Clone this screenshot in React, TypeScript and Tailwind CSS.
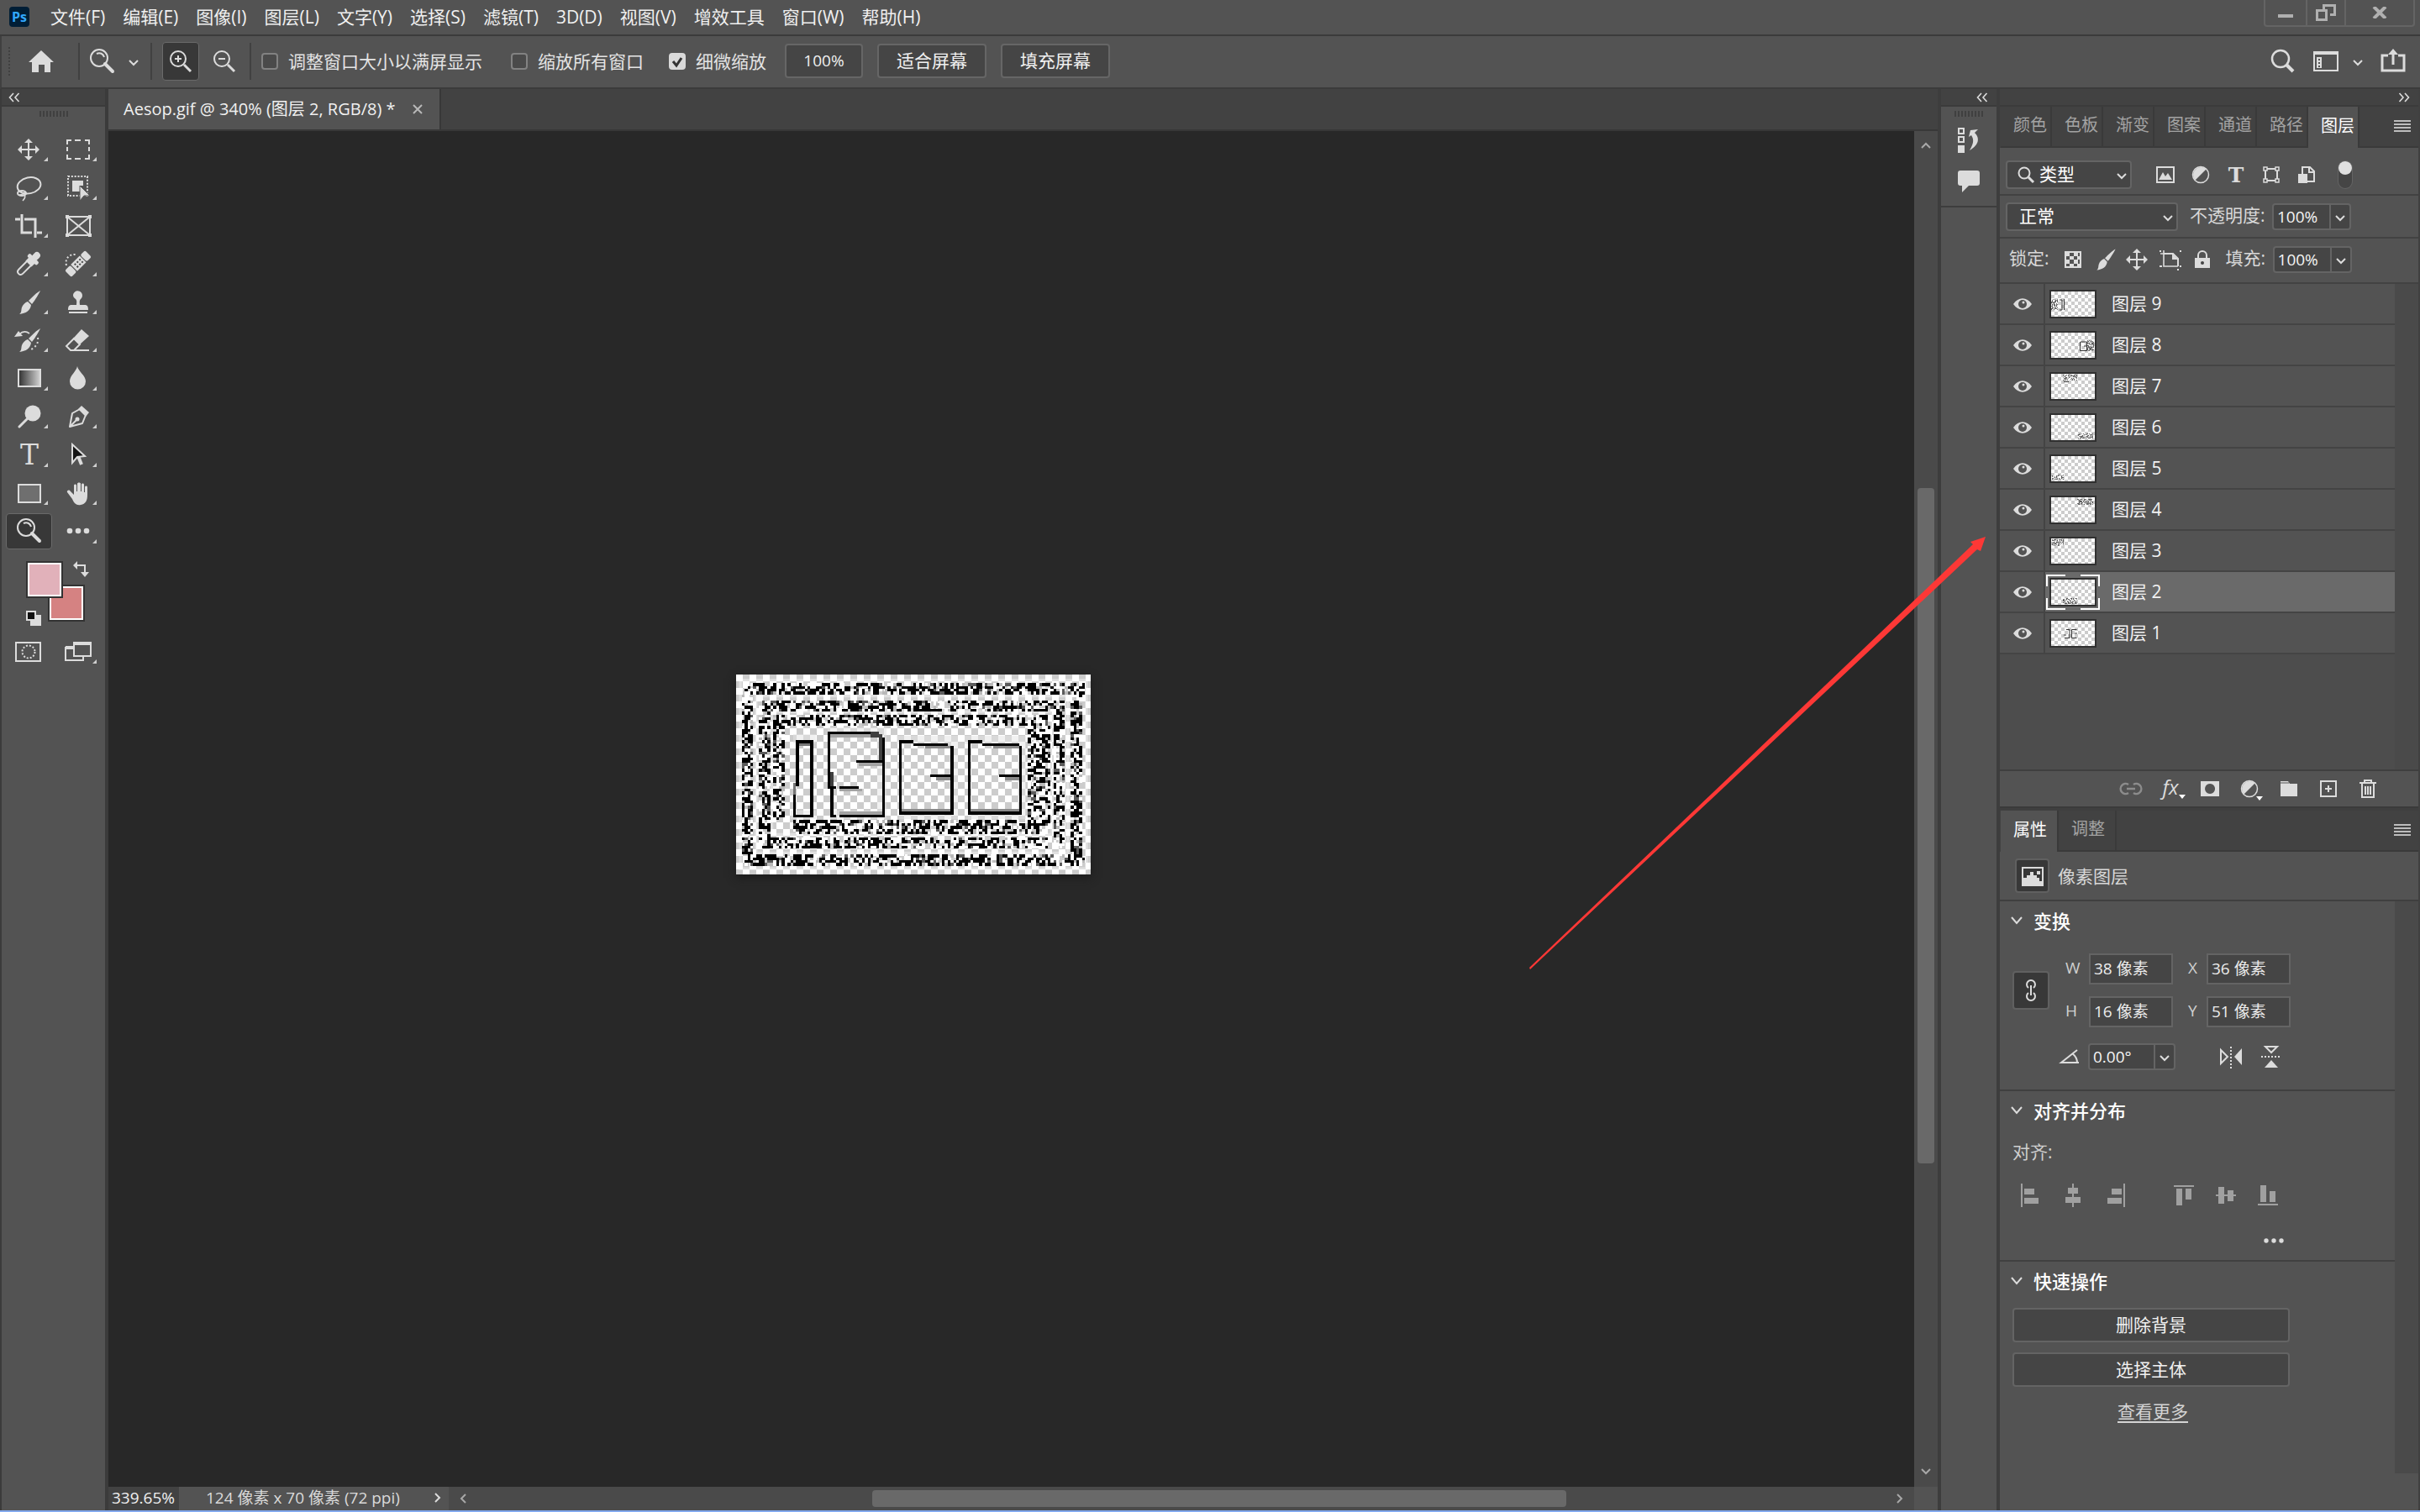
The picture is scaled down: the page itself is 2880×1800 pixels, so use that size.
import type { ReactNode } from "react";
import clsx from "clsx";

const menus = [
  "文件(F)",
  "编辑(E)",
  "图像(I)",
  "图层(L)",
  "文字(Y)",
  "选择(S)",
  "滤镜(T)",
  "3D(D)",
  "视图(V)",
  "增效工具",
  "窗口(W)",
  "帮助(H)",
];

const panelTabs = ["颜色", "色板", "渐变", "图案", "通道", "路径", "图层"];

type Box = [x: number, y: number, w: number, h: number];

const layers: { name: string; noise?: Box; lines?: string; active?: boolean }[] = [
  { name: "图层 9", noise: [0, 9, 8, 13], lines: "M10 10h3v12h-3M15.500 9v13" },
  { name: "图层 8", noise: [43, 9, 8, 13], lines: "M35 11h7.500v10.500h-8V11M39 16h4" },
  { name: "图层 7", noise: [14, 1, 17, 7], lines: "M15 9.500h6" },
  { name: "图层 6", noise: [31, 22, 19, 6] },
  { name: "图层 5", noise: [1, 22, 14, 6] },
  { name: "图层 4", noise: [31, 2, 19, 7] },
  { name: "图层 3", noise: [1, 1, 14, 8] },
  { name: "图层 2", noise: [14, 22, 17, 7], active: true },
  { name: "图层 1", lines: "M18 10.500h4v10h-6M15 17h3M24.500 20.500v-10h6M28 15h3M24.500 20.500h6" },
];

// rectangular rings of static around the digits, in document pixels
const bands: Box[] = [
  [3, 3, 119, 4],
  [9, 9, 106, 4],
  [17, 14, 92, 4],
  [20, 51, 89, 5],
  [9, 57, 100, 4],
  [3, 63, 119, 4],
  [2, 7, 4, 56],
  [8, 11, 4, 48],
  [13, 14, 4, 37],
  [102, 18, 8, 35],
  [111, 11, 4, 50],
  [117, 7, 4, 57],
];

function makeRandom(seed: number) {
  let a = seed;
  return () => {
    a = (a + 0x6d2b79f5) | 0;
    let t = Math.imul(a ^ (a >>> 15), 1 | a);
    t = (t + Math.imul(t ^ (t >>> 7), 61 | t)) ^ t;
    return ((t ^ (t >>> 14)) >>> 0) / 4294967296;
  };
}

function noiseCells([bx, by, w, h]: Box, seed: number) {
  const rand = makeRandom(seed);
  const out: Record<string, string> = { black: "", gray: "", light: "", white: "" };
  for (let y = by; y < by + h; y++) {
    for (let x = bx; x < bx + w; x++) {
      const r = rand();
      const kind = r < 0.43 ? "black" : r < 0.5 ? "gray" : r < 0.55 ? "light" : r < 0.8 ? "white" : "";
      if (kind) out[kind] += `M${x} ${y}h1v1h-1z`;
    }
  }
  return out;
}

function Noise({ box, seed }: { box: Box; seed: number }) {
  const cells = noiseCells(box, seed);
  return (
    <g shapeRendering="crispEdges">
      <path d={cells.white} fill="#fff" />
      <path d={cells.light} fill="#b9b9b9" />
      <path d={cells.gray} fill="#5c5c5c" />
      <path d={cells.black} fill="#000" />
    </g>
  );
}

function Artwork() {
  return (
    <svg viewBox="0 0 124 70" preserveAspectRatio="none" className="h-full w-full">
      <g fill="none" stroke="#fff" strokeWidth="1" opacity=".4">
        <rect x="1.500" y="2" width="121" height="66" />
        <rect x="7" y="7.500" width="109" height="55" />
        <rect x="12.500" y="13" width="98" height="43" />
      </g>
      {bands.map((b, i) => (
        <Noise key={i} box={b} seed={i * 7919 + 31} />
      ))}
      <g shapeRendering="crispEdges">
        <path
          d="M20 22.500h8M32 20h19v29h-18M56 23h20v26h-19M80 23h20v26h-19M19 49h9"
          fill="none"
          stroke="#e4e4e4"
          strokeWidth="3"
          opacity=".5"
        />
        {/* 1 */}
        <path d="M21 23h6v1h-6zM21 23h1v16h-1zM20 42h1v8h-1zM26 23h1v27h-1zM20 49h7v1h-7z" />
        <path d="M20 38h1v4h-1zM22 24h4v1h-4z" fill="#777" />
        {/* 8 */}
        <path d="M32 20h17v1H32zM32 20h1v19h-1zM51 22h1v28h-1zM42 30h9v1h-9zM32 39h3v1h-3zM36 39h7v1h-7zM33 40h1v10h-1zM33 49h2v1h-2zM36 49h15v1H36z" />
        <path d="M33 21h14v1H33zM43 31h8v1h-8zM36 40h8v1h-8zM36 48h15v1H36z" fill="#a3a3a3" />
        <path d="M47 20h3v1h1v1h-4zM50 22h1v8h-1zM33 34h1v5h-1z" fill="#3f3f3f" />
        {/* 3 */}
        <path d="M57 23h5v1h-5zM57 24h1v25h-1zM62 24h12v1H62zM75 25h1v24h-1zM68 35h7v1h-7zM58 48h17v1H58z" />
        <path d="M66 25h9v1h-9zM70 36h5v1h-5zM58 47h17v1H58z" fill="#8a8a8a" />
        {/* 3 */}
        <path d="M81 23h5v1h-5zM81 24h1v25h-1zM86 24h13v1H86zM99 25h1v24h-1zM92 35h7v1h-7zM82 48h17v1H82z" />
        <path d="M90 25h9v1h-9zM94 36h5v1h-5zM82 47h17v1H82z" fill="#8a8a8a" />
      </g>
    </svg>
  );
}

function Chevron({ dir = "down", className }: { dir?: "down" | "up" | "left" | "right"; className?: string }) {
  const d = {
    down: "M1 3l5 5 5-5",
    up: "M1 8l5-5 5 5",
    left: "M8 1L3 6l5 5",
    right: "M4 1l5 5-5 5",
  }[dir];
  return (
    <svg viewBox="0 0 12 12" className={clsx("h-3 w-3 shrink-0 fill-none stroke-2", className)}>
      <path d={d} stroke="currentColor" />
    </svg>
  );
}

function DoubleChevron({ flip }: { flip?: boolean }) {
  return (
    <svg viewBox="0 0 14 12" className={clsx("h-3 w-3.5", flip && "-scale-x-100")} fill="none" stroke="#ddd" strokeWidth="1.6">
      <path d="M6 1L1.500 6 6 11M12.500 1L8 6l4.500 5" />
    </svg>
  );
}

function Grip() {
  return (
    <div className="flex h-[7px] justify-center gap-0.5">
      {Array.from({ length: 9 }, (_, i) => (
        <i key={i} className="w-0.5 bg-[#404040]" />
      ))}
    </div>
  );
}

function Glyph({ size = 32, children, className }: { size?: number; children: ReactNode; className?: string }) {
  return (
    <svg
      width={size}
      height={size}
      viewBox={`${-size / 2} ${-size / 2} ${size} ${size}`}
      className={clsx("shrink-0 overflow-visible", className)}
      fill="#dcdcdc"
      stroke="none"
    >
      {children}
    </svg>
  );
}

const outline = { fill: "none", stroke: "#dcdcdc", strokeWidth: 2 };

const moveArrows = (
  <path d="M-1-8h2v7h7v-4l5 5-5 5v-4h-7v7h4l-5 5-5-5h4v-7h-7v4l-5-5 5-5v4h7v-7h-4l5-5 5 5h-4z" />
);
const brush = (
  <>
    <path d="M14-14c-2 4-6 11-10 16L0-2C4-6 10-12 14-14z" />
    <path d="M-1-1l4 4c-1 7-6 10-14 11 3-2 2-5 3-8s4-6 7-7z" />
  </>
);
const magnifier = (
  <>
    <circle cx="-3" cy="-4" r="10" {...outline} />
    <path d="M-6-9c4-2 8 0 9 4" {...outline} />
    <path d="M4 3L13 12" {...outline} strokeWidth={4} strokeLinecap="round" />
  </>
);

const tools: { name: string; icon: ReactNode; plain?: boolean; on?: boolean }[] = [
  { name: "移动工具", icon: moveArrows },
  {
    name: "矩形选框工具",
    icon: <path d="M-13-6v-5h5M-4-11h7M8-11h5v5M13-3v5M13 6v5h-5M3 11h-7M-8 11h-5v-5M-13 2v-5" {...outline} />,
  },
  {
    name: "套索工具",
    icon: (
      <>
        <ellipse cx="1" cy="-2" rx="14" ry="9.500" transform="rotate(-12)" {...outline} />
        <ellipse cx="-8" cy="7" rx="5" ry="3" {...outline} />
        <path d="M-11 9c3 0 6-2 7-4M-6 8c3 2 2 5-1 8" {...outline} strokeWidth={1.6} />
      </>
    ),
  },
  {
    name: "对象选择工具",
    icon: (
      <>
        <path d="M-12-13h23v23h-23z" {...outline} strokeDasharray="2 1.830" />
        <path d="M-7-8H6V-2H2V5H-7z" />
        <path d="M2-2v18l5-6h7z" stroke="#535353" strokeWidth="1" />
      </>
    ),
  },
  {
    name: "裁剪工具",
    icon: <path d="M-16-8h6M-8-14V8H4M-5-8H8v22M10 8h6" {...outline} strokeWidth={3} />,
  },
  {
    name: "图框工具",
    plain: true,
    icon: (
      <>
        <path d="M-13-11h27v22h-27zM-13-11l27 22M14-11l-27 22" {...outline} />
        <path d="M-15-13h4v4h-4zM12-13h4v4h-4zM-15 9h4v4h-4zM12 9h4v4h-4z" />
      </>
    ),
  },
  {
    name: "吸管工具",
    icon: (
      <g transform="rotate(45)">
        <rect x="-4" y="-18" width="8" height="11" rx="4" />
        <rect x="-8" y="-10" width="16" height="5" rx="2" />
        <rect x="-5" y="-8" width="10" height="8" />
        <path d="M-3.500-1v14c0 5 7 5 7 0V-1" {...outline} />
      </g>
    ),
  },
  {
    name: "污点修复画笔工具",
    icon: (
      <>
        <g transform="rotate(45)">
          <rect x="-5.500" y="-17" width="11" height="8" rx="2" />
          <rect x="-5.500" y="-8" width="11" height="15" />
          <rect x="-5.500" y="8" width="11" height="9" rx="2" />
          <path d="M-3-5h2M1-5h2M-3-1h2M1-1h2M-3 3h2M1 3h2" stroke="#444" strokeWidth="2" />
        </g>
        <path d="M-14 2c-2-8 3-14 12-13" {...outline} strokeDasharray="2 2.500" />
      </>
    ),
  },
  { name: "画笔工具", icon: brush },
  {
    name: "仿制图章工具",
    icon: <path d="M-6-8a5.500 5.500 0 1 1 9 4c-2 2-1 5-1 7h6c3 0 4 2 4 6h-24c0-4 1-6 4-6h6c0-2 1-5-1-7a5 5 0 0 1-3-4zM-11 11h22v2h-22z" />,
  },
  {
    name: "历史记录画笔工具",
    icon: (
      <>
        {brush}
        <path d="M-17-4l5-7 5 6z" />
        <path d="M-11-7c4-4 8-4 12-1" {...outline} strokeWidth={1.6} />
        <path d="M11-3c1 6-2 11-8 14" {...outline} strokeDasharray="2 3" />
      </>
    ),
  },
  {
    name: "橡皮擦工具",
    icon: (
      <>
        <path d="M-6-2L4-13l9 8L2 5z" />
        <path d="M-5-2l-9 9 5 5h4L2 5zM-9 12h22" {...outline} />
      </>
    ),
  },
  {
    name: "渐变工具",
    icon: (
      <>
        <defs>
          <linearGradient id="ramp">
            <stop offset="0" stopColor="#303030" />
            <stop offset="1" stopColor="#d4d4d4" />
          </linearGradient>
        </defs>
        <rect x="-12" y="-10" width="26" height="20" fill="url(#ramp)" stroke="#dcdcdc" strokeWidth="2" />
      </>
    ),
  },
  { name: "模糊工具", icon: <path d="M-1-14c1 6 10 11 10 18a9.500 9.500 0 0 1-19 0c0-7 8-12 9-18z" /> },
  {
    name: "减淡工具",
    icon: (
      <>
        <circle cx="5" cy="-4" r="9.500" />
        <path d="M-1 2l-10 10" {...outline} strokeWidth={3} strokeLinecap="round" />
      </>
    ),
  },
  {
    name: "钢笔工具",
    icon: (
      <>
        <path d="M-10 12l3-16 9-5 7 7-4 10zM-10 12l9-9" {...outline} strokeLinejoin="round" />
        <circle cx="-1" cy="3" r="2.500" />
        <path d="M4-13l9 8-4 5-9-9z" />
      </>
    ),
  },
  {
    name: "文字工具",
    icon: (
      <text x="1" y="12" textAnchor="middle" className="font-['DejaVu_Serif',serif] text-[33px]">
        T
      </text>
    ),
  },
  {
    name: "路径选择工具",
    icon: (
      <>
        <path d="M0 2l4 10" {...outline} strokeWidth={4} />
        <path d="M-7-12v22l6-7 9-1z" fill="#151515" stroke="#dcdcdc" strokeWidth="2" />
      </>
    ),
  },
  {
    name: "矩形工具",
    icon: <rect x="-12" y="-10" width="26" height="21" fill="#6f6f6f" stroke="#dcdcdc" strokeWidth="2" />,
  },
  {
    name: "抓手工具",
    icon: (
      <path d="M-7 7l-6-8c-1-2 2-3 3-2l5 5v-11c0-2 3-2 3 0v7h1v-9c0-2 4-2 4 0v9h1v-8c0-2 3-2 3 0v9h1v-6c0-2 3-2 3 0v9c0 7-2 11-8 12-5 1-8-2-10-7z" />
    ),
  },
  { name: "缩放工具", icon: magnifier, plain: true, on: true },
  {
    name: "编辑工具栏",
    icon: (
      <>
        <circle cx="-10" r="3.300" />
        <circle r="3.300" />
        <circle cx="10" r="3.300" />
      </>
    ),
  },
];

function ToolButton({ name, icon, plain, on }: (typeof tools)[number]) {
  return (
    <button
      aria-label={name}
      className={clsx(
        "relative flex h-[43px] w-[55px] items-center justify-center place-self-center rounded border",
        on ? "border-[#6a6a6a] bg-[#383838]" : "border-transparent",
      )}
    >
      <Glyph>{icon}</Glyph>
      {!plain && (
        <svg viewBox="0 0 6 6" className="absolute right-1 bottom-1.5 h-[5px] w-[5px] fill-[#cfcfcf]">
          <path d="M6 0v6H0z" />
        </svg>
      )}
    </button>
  );
}

function TitleBar() {
  return (
    <header className="flex h-[43px] shrink-0 border-b-2 border-[#3b3b3b] pl-[11px]">
      <div className="mt-2 flex h-6 w-6 items-center justify-center rounded bg-[#001e36] text-base font-bold text-[#31a8ff]">
        Ps
      </div>
      <nav className="flex h-10 items-center gap-[21px] pl-[25px]">
        {menus.map((m) => (
          <button key={m} className="whitespace-nowrap">
            {m}
          </button>
        ))}
      </nav>
      <div className="mr-1.5 ml-auto flex h-8 rounded-b border-2 border-t-0 border-[#646464]">
        <button aria-label="最小化" className="flex w-12 items-center justify-center">
          <i className="mt-2 h-1 w-[18px] bg-[#b0b0b0]" />
        </button>
        <button aria-label="还原" className="flex w-12 items-center justify-center border-x-2 border-[#646464]">
          <svg viewBox="0 0 24 20" className="h-5 w-6 fill-none stroke-[#b0b0b0] stroke-3">
            <path d="M9.500 7V1.500h13v11H17M1.500 7.500h11v11h-11z" />
          </svg>
        </button>
        <button aria-label="关闭" className="flex w-20 items-center justify-center">
          <svg viewBox="0 0 18 14" className="h-3.5 w-[18px] stroke-[#b0b0b0] stroke-4">
            <path d="M2 0l14 14M16 0L2 14" />
          </svg>
        </button>
      </div>
    </header>
  );
}

function Check({ label, checked }: { label: string; checked?: boolean }) {
  return (
    <label className="flex items-center gap-3">
      <span className="relative flex">
        <input
          type="checkbox"
          defaultChecked={checked}
          className="h-5 w-5 appearance-none rounded border-2 border-[#828282] bg-[#4a4a4a] checked:border-[#dadada] checked:bg-[#dadada]"
        />
        {checked && (
          <svg viewBox="0 0 20 20" className="pointer-events-none absolute inset-0 fill-none stroke-[#333] stroke-3">
            <path d="M5 10l4 5 6-9" />
          </svg>
        )}
      </span>
      {label}
    </label>
  );
}

function OptionsBar() {
  const divider = "h-11 w-0.5 bg-[#414141]";
  const button = "h-[41px] rounded border-2 border-[#666] bg-[#454545] pb-0.5 text-[#f0f0f0]";
  return (
    <section className="flex h-[63px] shrink-0 items-center border-b-2 border-l-2 border-[#3b3b3b] border-l-[#404040] pb-0.5 text-[#e4e4e4]">
      <div className="ml-2 flex flex-col gap-0.5">
        {Array.from({ length: 9 }, (_, i) => (
          <i key={i} className="h-0.5 w-0.5 bg-[#404040]" />
        ))}
      </div>
      <button aria-label="主页" className="mr-7 ml-[21px]">
        <Glyph className="translate-y-px">
          <path d="M0-14L15 0h-4v12H4V3h-7v9h-8V0h-4z" />
        </Glyph>
      </button>
      <div className={divider} />
      <button aria-label="缩放工具" className="ml-2.5 flex items-center gap-4">
        <Glyph>{magnifier}</Glyph>
        <Chevron className="mt-1 text-[#dcdcdc]" />
      </button>
      <div className={clsx(divider, "mr-3 ml-3.5")} />
      <button aria-label="放大" className="flex h-[46px] w-11 items-center justify-center rounded border border-[#6a6a6a] bg-[#383838]">
        <Glyph>
          <circle cx="-3" cy="-3" r="9" {...outline} />
          <path d="M-7-3h8M-3-7v8" {...outline} />
          <path d="M4 4l8 8" {...outline} strokeWidth={3} />
        </Glyph>
      </button>
      <button aria-label="缩小" className="mx-3.5">
        <Glyph>
          <circle cx="-3" cy="-3" r="9" {...outline} />
          <path d="M-7-3h8" {...outline} />
          <path d="M4 4l8 8" {...outline} strokeWidth={3} />
        </Glyph>
      </button>
      <div className={clsx(divider, "mr-3")} />
      <div className="flex gap-[34px]">
        <Check label="调整窗口大小以满屏显示" />
        <Check label="缩放所有窗口" />
        <div className="-ml-1">
          <Check label="细微缩放" checked />
        </div>
      </div>
      <div className="ml-[22px] flex gap-[17px]">
        <button className={clsx(button, "w-[93px] text-[19px]")}>100%</button>
        <button className={clsx(button, "w-[130px]")}>适合屏幕</button>
        <button className={clsx(button, "w-[130px]")}>填充屏幕</button>
      </div>
      <div className="mr-4 ml-auto flex items-center">
        <button aria-label="搜索">
          <Glyph>
            <circle cx="-2" cy="-3" r="10" {...outline} strokeWidth={2.5} />
            <path d="M5 4l8 8" {...outline} strokeWidth={4} />
          </Glyph>
        </button>
        <button aria-label="工作区" className="ml-5 flex items-center gap-4">
          <Glyph>
            <path d="M-14-9h28v20h-28z" {...outline} />
            <path d="M-15-12h30v4h-30zM-11-5h6v13h-6z" />
            <path d="M-8-3v2M-8 1v2M-8 5v2" stroke="#535353" strokeWidth="2" />
          </Glyph>
          <Chevron className="mt-1 text-[#dcdcdc]" />
        </button>
        <button aria-label="共享" className="ml-5">
          <Glyph>
            <path d="M-6-7h-7v18h26V-7H6" {...outline} strokeWidth={3} />
            <path d="M-6-8l6-7 6 7h-4.500V4h-3V-8z" />
          </Glyph>
        </button>
      </div>
    </section>
  );
}

function ToolBar() {
  return (
    <aside className="flex w-[129px] shrink-0 flex-col border-r-4 border-l-2 border-[#3b3b3b]">
      <button aria-label="折叠工具栏" className="flex h-[21px] items-center border-b-2 border-[#3b3b3b] bg-[#424242] pl-2">
        <DoubleChevron />
      </button>
      <div className="h-7 pt-[5px]">
        <Grip />
      </div>
      <div className="grid h-[500px] grid-cols-2 pr-[3px] pl-[3px]">
        {tools.map((t) => (
          <ToolButton key={t.name} {...t} />
        ))}
      </div>
      <div className="relative h-[98px]">
        <button aria-label="背景色" className="absolute top-[41px] left-[55px] h-11 w-11 border-2 border-[#333] bg-white p-0.5">
          <i className="block h-full bg-[#d58282]" />
        </button>
        <button aria-label="前景色" className="absolute top-[13px] left-[29px] h-11 w-11 border-2 border-[#333] bg-white p-0.5">
          <i className="block h-full bg-[#e1b1ba]" />
        </button>
        <button aria-label="切换前景色和背景色" className="absolute top-[13px] left-[84px]">
          <Glyph size={20}>
            <path d="M-5-5H5V4" {...outline} />
            <path d="M-9-5l5-5v10zM0 3h10l-5 6z" />
          </Glyph>
        </button>
        <button aria-label="默认颜色" className="absolute top-[71px] left-7">
          <Glyph size={20}>
            <path d="M-4-4H9V9H-4z" />
            <path d="M-8-8h10v10h-10z" fill="#111" stroke="#dcdcdc" strokeWidth="2" />
          </Glyph>
        </button>
      </div>
      <div className="grid h-[45px] grid-cols-2 pr-[3px] pl-[3px]">
        <ToolButton
          name="快速蒙版"
          plain
          icon={
            <>
              <path d="M-15-11h29v22h-29z" {...outline} />
              <circle cx="0" r="7.500" {...outline} strokeDasharray="2 2" />
            </>
          }
        />
        <ToolButton
          name="更改屏幕模式"
          icon={
            <>
              <path d="M-6-5h-9v15H6V5" {...outline} />
              <path d="M-15-7h9v4h-9zM-6-12h22v4H-6z" />
              <path d="M-5-11h20V5H-5z" {...outline} />
            </>
          }
        />
      </div>
    </aside>
  );
}

function Document() {
  return (
    <main className="flex min-w-0 flex-1 flex-col">
      <div className="flex h-[50px] shrink-0 border-b-2 border-[#383838] bg-[#424242]">
        <div className="flex items-center gap-5 border-r-2 border-[#383838] bg-[#535353] pr-5 pl-[18px] text-xl text-[#f0f0f0]">
          Aesop.gif @ 340% (图层 2, RGB/8) *
          <button aria-label="关闭文档">
            <svg viewBox="0 0 12 12" className="h-3 w-3 stroke-[#b8b8b8] stroke-2">
              <path d="M1 1l10 10M11 1L1 11" />
            </svg>
          </button>
        </div>
      </div>
      <div className="flex min-h-0 flex-1">
        <div className="relative flex-1 bg-[#282828]">
          <div className="absolute top-[647px] left-[747px] h-[238px] w-[422px] bg-[conic-gradient(#ccc_25%,#fff_0_50%,#ccc_0_75%,#fff_0)] bg-[size:16px_16px] shadow-[0_4px_10px_#1c1c1c]">
            <Artwork />
          </div>
        </div>
        <div className="flex w-7 flex-col items-center bg-[#4a4a4a] py-3 text-[#a8a8a8]">
          <Chevron dir="up" />
          <div className="w-5 flex-1 pt-[401px]">
            <div className="h-[804px] rounded-sm bg-[#696969]" />
          </div>
          <Chevron />
        </div>
      </div>
      <footer className="flex h-7 shrink-0 items-center bg-[#4a4a4a] text-[19px]">
        <input
          aria-label="缩放比例"
          defaultValue="339.65%"
          className="h-full w-[84px] bg-[#424242] pb-0.5 pl-1 text-[#f0f0f0] outline-none"
        />
        <div className="flex h-full w-[321px] items-center justify-between bg-[#535353] pr-2 pb-0.5 pl-8 whitespace-nowrap text-[#dadada]">
          <span>124 像素 x 70 像素 (72 ppi)</span>
          <Chevron dir="right" className="text-[#dcdcdc]" />
        </div>
        <Chevron dir="left" className="ml-3 text-[#a8a8a8]" />
        <div className="flex-1 pl-[480px]">
          <div className="h-5 w-[826px] rounded-sm bg-[#696969]" />
        </div>
        <Chevron dir="right" className="mr-3 text-[#a8a8a8]" />
        <div className="h-full w-7 bg-[#535353]" />
      </footer>
    </main>
  );
}

function PanelStrip() {
  return (
    <div className="flex w-[74px] shrink-0 flex-col border-x-4 border-[#3d3d3d]">
      <div className="flex h-[21px] items-center justify-end border-b-2 border-[#3b3b3b] bg-[#424242] pr-2.5">
        <DoubleChevron />
      </div>
      <div className="flex h-[120px] flex-col items-center border-b-2 border-[#3d3d3d] pt-[5px]">
        <Grip />
        <button aria-label="历史记录" className="mt-3">
          <Glyph>
            <path d="M-12-14h6v6h-6zM-12-4h6v6h-6z" {...outline} />
            <path d="M-13 6h8v9h-8zM0-4l2-8 9-1-4 4c6 6 6 14-6 21 4-7 6-12 2-18z" />
          </Glyph>
        </button>
        <button aria-label="注释" className="mt-4">
          <Glyph>
            <path d="M-10-12h20q3 0 3 3V3q0 3-3 3H0l-8 8V6h-2q-3 0-3-3V-9q0-3 3-3z" />
          </Glyph>
        </button>
      </div>
    </div>
  );
}

function Tabs({ items, active, wide }: { items: string[]; active: string; wide?: boolean }) {
  return (
    <div role="tablist" className="flex h-[49px] shrink-0 bg-[#424242] pl-px text-xl">
      {items.map((t) => (
        <button
          key={t}
          role="tab"
          aria-selected={t === active}
          className={clsx(
            "border-r-2 border-[#3a3a3a] pb-1 pl-[15px] whitespace-nowrap",
            t === active ? "bg-[#535353] text-white" : "border-b-2 text-[#a3a3a3]",
            wide ? "pr-3" : "pr-1",
          )}
        >
          {t}
        </button>
      ))}
      <div className="flex flex-1 justify-end border-b-2 border-[#3a3a3a] pt-4 pr-[9px]">
        <button aria-label="面板菜单" className="flex h-3.5 w-5 flex-col justify-between">
          {[0, 1, 2, 3].map((i) => (
            <i key={i} className="h-0.5 w-5 bg-[#bdbdbd]" />
          ))}
        </button>
      </div>
    </div>
  );
}

function Percent({ id, value, wide }: { id: string; value: string; wide?: boolean }) {
  return (
    <div className={clsx("flex h-8 rounded border-2 border-[#646464] bg-[#454545]", wide ? "w-[104px]" : "w-[94px]")}>
      <input
        id={id}
        aria-label={id}
        defaultValue={value}
        className="w-0 flex-1 pl-1 text-[19px] text-[#f4f4f4] outline-none"
      />
      <button aria-label="展开" className="flex w-6 items-center justify-center border-l-2 border-[#646464]">
        <Chevron className="mt-1 text-[#dcdcdc]" />
      </button>
    </div>
  );
}

function LayerThumb({ noise, lines, active, seed }: { noise?: Box; lines?: string; active?: boolean; seed: number }) {
  return (
    <div className="relative ml-[5px] flex">
      <div className="h-[34px] w-14 border-2 border-[#303030] bg-[conic-gradient(#ccc_25%,#fff_0_50%,#ccc_0_75%,#fff_0)] bg-[size:8px_8px]">
        <svg viewBox="0 0 52 30" className="h-[30px] w-[52px]">
          {noise && (
            <g opacity=".55">
              <Noise box={noise} seed={seed} />
            </g>
          )}
          <path d={lines} fill="none" stroke="#333" strokeWidth="1" />
        </svg>
      </div>
      {active && (
        <svg viewBox="0 0 64 42" className="absolute -top-1 -left-1 h-[42px] w-16 fill-none stroke-white stroke-2">
          <path d="M1 14V1h22M41 1h22v13M63 28v13H41M23 41H1V28" />
        </svg>
      )}
    </div>
  );
}

function LayersPanel() {
  const bar = "flex shrink-0 items-center border-b-2 border-[#424242]";
  return (
    <section className="flex h-[835px] shrink-0 flex-col">
      <Tabs items={panelTabs} active="图层" />
      <div className={clsx(bar, "h-[57px] pt-2 pl-[7px]")}>
        <div className="relative flex h-[34px] w-[150px] items-center">
          <select
            aria-label="过滤类型"
            className="h-full w-full appearance-none rounded border-2 border-[#646464] bg-[#454545] pb-1 pl-[38px] text-white"
          >
            <option>类型</option>
          </select>
          <Glyph size={24} className="pointer-events-none absolute left-3">
            <circle cx="-2" cy="-2" r="6.500" {...outline} />
            <path d="M3 3l6 6" {...outline} strokeWidth={3} />
          </Glyph>
          <Chevron className="pointer-events-none absolute right-1.5 mt-1 text-[#dcdcdc]" />
        </div>
        <div className="flex items-center gap-[18px] pl-7">
          <button aria-label="像素图层滤镜">
            <Glyph size={24}>
              <path d="M-10-9h20v18h-20z" {...outline} />
              <path d="M-8 6l5-9 3 5 3-4 5 8z" />
            </Glyph>
          </button>
          <button aria-label="调整图层滤镜">
            <Glyph size={24}>
              <circle r="9.500" {...outline} strokeWidth={1.5} />
              <path d="M-6.500 6.500a9.200 9.200 0 0 1 13-13z" />
            </Glyph>
          </button>
          <button aria-label="文字图层滤镜">
            <Glyph size={24}>
              <text y="9" textAnchor="middle" className="font-['DejaVu_Serif',serif] text-[25px] font-bold">
                T
              </text>
            </Glyph>
          </button>
          <button aria-label="形状图层滤镜">
            <Glyph size={24}>
              <path d="M-7-7H7V7H-7z" {...outline} />
              <path d="M-9-9h4v4h-4zM5-9h4v4H5zM-9 5h4v4h-4zM5 5h4v4H5z" fill="#535353" stroke="#dcdcdc" strokeWidth="1.500" />
            </Glyph>
          </button>
          <button aria-label="智能对象滤镜">
            <Glyph size={24}>
              <path d="M-5 0v-9h9l5 5V8H0M3-9v6h6" {...outline} />
              <path d="M-10-1h11v11h-11z" />
            </Glyph>
          </button>
          <button aria-label="打开或关闭图层滤镜" className="ml-2 flex h-8 w-4 items-start rounded-full bg-[#454545] ring-1 ring-[#646464]">
            <i className="h-4 w-4 rounded-full bg-[#e0e0e0]" />
          </button>
        </div>
      </div>
      <div className={clsx(bar, "h-[51px] pl-[7px]")}>
        <div className="relative flex h-[34px] w-[205px] items-center">
          <select
            aria-label="混合模式"
            className="h-full w-full appearance-none rounded border-2 border-[#646464] bg-[#454545] pb-1 pl-3.5 text-white"
          >
            <option>正常</option>
          </select>
          <Chevron className="pointer-events-none absolute right-1.5 mt-1 text-[#dcdcdc]" />
        </div>
        <label htmlFor="不透明度" className="w-28 pb-1 pl-3.5 whitespace-nowrap text-[#d8d8d8]">
          不透明度:
        </label>
        <Percent id="不透明度" value="100%" />
      </div>
      <div className={clsx(bar, "h-[54px] gap-3 border-b pb-0.5 pl-[11px]")}>
        <span className="pb-1 whitespace-nowrap text-[#d8d8d8]">锁定:</span>
        <button aria-label="锁定透明像素" className="ml-1">
          <Glyph size={24}>
            <path d="M-9-9H9V9H-9z" {...outline} />
            <path d="M-9-9h5v5h-5zM1-9h5v5H1zM-4-4h5v4h-5zM5-4h4v4H5zM-9 0h5v5h-5zM1 0h5v5H1zM-4 5h5v4h-5zM5 5h4v4H5z" />
          </Glyph>
        </button>
        <button aria-label="锁定图像像素" className="ml-0.5">
          <Glyph size={24}>
            <g transform="scale(.9)">{brush}</g>
          </Glyph>
        </button>
        <button aria-label="锁定位置" className="ml-0.5">
          <Glyph size={24}>{moveArrows}</Glyph>
        </button>
        <button aria-label="防止自动嵌套" className="ml-1">
          <Glyph size={24}>
            <path d="M-8-11V8H9M-12-7h4" {...outline} strokeWidth={1.6} />
            <path d="M-8-7H3l6 6v9" {...outline} />
            <path d="M2-7l7 7H2zM-13-11h2v2h-2zM11-11h2v2h-2zM-13 7h3v2h-3zM11 7h2v2h-2zM8 11h2v2H8z" />
          </Glyph>
        </button>
        <button aria-label="锁定全部" className="ml-0.5">
          <Glyph size={24}>
            <path d="M-9-2H9V10H-9z" />
            <path d="M-5-1v-4a5 5 0 0 1 10 0v4" {...outline} />
            <circle cy="4" r="2" fill="#444" />
          </Glyph>
        </button>
        <label htmlFor="填充" className="ml-1 w-11 pb-1 whitespace-nowrap text-[#d8d8d8]">
          填充:
        </label>
        <Percent id="填充" value="100%" />
      </div>
      <div className="flex min-h-0 flex-1 border-b-2 border-[#3f3f3f] bg-[#4d4d4d]">
        <ul className="flex-1">
          {layers.map((l, i) => (
            <li key={l.name} className="flex h-[49px] border-b-2 border-[#444] bg-[#535353]">
              <button aria-label="显示或隐藏图层" className="flex w-[54px] items-center justify-center border-r-2 border-[#444] pl-0.5">
                <Glyph size={24}>
                  <path d="M-11 0C-5-9 5-9 11 0 5 9-5 9-11 0z" />
                  <circle r="5" fill="#535353" />
                  <circle cx="1" cy="-2" r="1.500" />
                </Glyph>
              </button>
              <div className={clsx("flex flex-1 items-center", l.active && "bg-[#6a6a6a]")}>
                <LayerThumb {...l} seed={i * 101 + 5} />
                <span className="pb-0.5 pl-[18px] text-[#f2f2f2]">{l.name}</span>
              </div>
            </li>
          ))}
        </ul>
        <div className="w-7 bg-[#4a4a4a]" />
      </div>
      <div className="flex h-11 shrink-0 items-center justify-end gap-[23px] border-b-2 border-[#3a3a3a] pr-12">
        <button aria-label="链接图层">
          <Glyph size={24}>
            <path d="M-3-5a6 6 0 1 0 0 10M3-5a6 6 0 1 1 0 10M-5 0H5" fill="none" stroke="#8c8c8c" strokeWidth="2.500" />
          </Glyph>
        </button>
        <button aria-label="图层样式" className="relative -mt-1 w-6 text-2xl text-[#dcdcdc] italic">
          fx
          <svg viewBox="0 0 8 5" className="absolute -right-1.5 bottom-0.5 h-[5px] w-2 fill-white">
            <path d="M0 0h8L4 5z" />
          </svg>
        </button>
        <button aria-label="添加蒙版">
          <Glyph size={24}>
            <path d="M-11-9h22V9h-22zM0-6a6 6 0 1 0 .1 0z" fillRule="evenodd" />
          </Glyph>
        </button>
        <button aria-label="新建填充或调整图层" className="relative">
          <Glyph size={24}>
            <circle r="9.500" {...outline} strokeWidth={1.5} />
            <path d="M-6.500 6.500a9.200 9.200 0 0 1 13-13z" />
          </Glyph>
          <svg viewBox="0 0 8 5" className="absolute -right-1 -bottom-0.5 h-[5px] w-2 fill-white">
            <path d="M0 0h8L4 5z" />
          </svg>
        </button>
        <button aria-label="新建组">
          <Glyph size={24}>
            <path d="M-10-9h9l2 3h9V9h-20z" />
            <path d="M-10-7h10" stroke="#535353" />
          </Glyph>
        </button>
        <button aria-label="新建图层">
          <Glyph size={24}>
            <path d="M-9-9H9V9H-9zM-4 0h8M0-4v8" {...outline} />
          </Glyph>
        </button>
        <button aria-label="删除图层">
          <Glyph size={24}>
            <path d="M-7-6V10H7V-6M-3-3V7M0-3V7M3-3V7M-10-7h20M-4-7v-3h8v3" {...outline} />
          </Glyph>
        </button>
      </div>
    </section>
  );
}

function Field({ label, value, narrow }: { label: string; value: string; narrow?: boolean }) {
  return (
    <div className="flex items-center">
      <label htmlFor={label} className={clsx("pb-1 text-[19px] text-[#d0d0d0]", narrow ? "w-[22px]" : "w-7")}>
        {label}
      </label>
      <div className="flex h-[37px] w-[100px] items-center border-2 border-[#646464] bg-[#454545] pb-0.5 pl-1">
        <input id={label} defaultValue={`${value} 像素`} className="w-full text-[19px] text-[#ececec] outline-none" />
      </div>
    </div>
  );
}

function SectionTitle({ children }: { children: ReactNode }) {
  return (
    <h2 className="flex h-12 items-center text-[22px] font-medium text-white">
      <button className="flex items-center gap-3 pb-0.5 pl-3">
        <svg viewBox="0 0 14 10" className="h-2.5 w-4 fill-none stroke-[#dcdcdc] stroke-2">
          <path d="M1 1l6 7 6-7" />
        </svg>
        {children}
      </button>
    </h2>
  );
}

const alignIcons = [
  ["左对齐", "M-12-14h2v28h-2zM-8-8H4v7H-8zM-8 3H9v7H-8z"],
  ["水平居中对齐", "M-1-14h2v28h-2zM-6-9H6v7H-6zM-9 2H9v7H-9z"],
  ["右对齐", "M10-14h2v28h-2zM-4-8H8v7H-4zM-9 3H8v7H-9z"],
  ["顶对齐", "M-12-12h24v2h-24zM-9-8h7v20h-7zM2-8h7V5H2z"],
  ["垂直居中对齐", "M-12-1h24v2h-24zM-9-10h7v20h-7zM2-6h7V7H2z"],
  ["底对齐", "M-12 10h24v2h-24zM-9-12h7V8h-7zM2-5h7V8H2z"],
];

function PropertiesPanel() {
  const wideButton = "h-[41px] rounded border-2 border-[#646464] bg-[#454545] pb-0.5 text-[#f0f0f0]";
  return (
    <section className="flex min-h-0 flex-1 flex-col border-t-3 border-[#3f3f3f]">
      <Tabs items={["属性", "调整"]} active="属性" wide />
      <div className="flex h-[59px] shrink-0 items-center gap-2.5 border-b-2 border-[#3f3f3f] pl-[18px] text-[#d8d8d8]">
        <div className="flex h-[41px] w-[41px] items-center justify-center rounded border-2 border-[#606060] bg-[#383838]">
          <Glyph>
            <path d="M-12-10h24v21h-24z" {...outline} />
            <path d="M-11 10V2h4v-3h4v-4h4v4h4v3h3v4h3v4zM5-6h4v4H5z" />
          </Glyph>
        </div>
        像素图层
      </div>
      <div className="flex min-h-0 flex-1">
        <div className="flex-1">
          <div className="h-[226px] border-b-2 border-[#404040]">
            <SectionTitle>变换</SectionTitle>
            <div className="flex items-center pt-3.5 pl-[15px]">
              <button aria-label="链接宽高" className="flex h-[46px] w-11 items-center justify-center rounded border-2 border-[#606060] bg-[#383838]">
                <Glyph>
                  <path d="M-3-3a5 5 0 1 1 6 0M-3 3a5 5 0 1 0 6 0M0-6V6" {...outline} />
                </Glyph>
              </button>
              <div className="ml-[19px] flex gap-[18px]">
                <div className="flex flex-col gap-3.5">
                  <Field label="W" value="38" />
                  <Field label="H" value="16" />
                </div>
                <div className="flex flex-col gap-3.5">
                  <Field label="X" value="36" narrow />
                  <Field label="Y" value="51" narrow />
                </div>
              </div>
            </div>
            <div className="flex items-center pt-[19px] pl-[71px]">
              <Glyph size={24}>
                <path d="M9-8L-10 7H11M3-4c4 3 6 7 6 11" {...outline} />
              </Glyph>
              <div className="ml-2.5">
                <Percent id="角度" value="0.00°" wide />
              </div>
              <button aria-label="水平翻转" className="ml-[50px]">
                <Glyph>
                  <path d="M-12-8v16l8-8z" {...outline} />
                  <path d="M13-10v20L4 0z" />
                  <path d="M0-12v26" {...outline} strokeDasharray="2 2" />
                </Glyph>
              </button>
              <button aria-label="垂直翻转" className="ml-4">
                <Glyph>
                  <path d="M-7-12H7L0-5z" {...outline} />
                  <path d="M-8 13H8L0 4z" />
                  <path d="M-12 0h24" {...outline} strokeDasharray="2 2" />
                </Glyph>
              </button>
            </div>
          </div>
          <div className="h-[203px] border-b-2 border-[#404040]">
            <SectionTitle>对齐并分布</SectionTitle>
            <p className="flex h-12 items-center pl-[15px] text-[#cfcfcf]">对齐:</p>
            <div className="flex gap-[18px] pt-3 pl-[21px]">
              {alignIcons.map(([name, d], i) => (
                <button key={name} aria-label={name} className={i === 3 ? "ml-8" : ""}>
                  <svg viewBox="-16 -16 32 32" className="h-8 w-8 fill-[#a0a0a0]">
                    <path d={d} />
                  </svg>
                </button>
              ))}
            </div>
            <button aria-label="更多选项" className="mt-[22px] ml-[310px] flex">
              <Glyph>
                <circle cx="-9" r="2.700" />
                <circle r="2.700" />
                <circle cx="9" r="2.700" />
              </Glyph>
            </button>
          </div>
          <SectionTitle>快速操作</SectionTitle>
          <div className="ml-[15px] flex w-[330px] flex-col gap-3 pt-[7px]">
            <button className={wideButton}>删除背景</button>
            <button className={wideButton}>选择主体</button>
            <a href="#more" className="self-center pt-[3px] pl-1 text-[#d4d4d4] underline underline-offset-4">
              查看更多
            </a>
          </div>
        </div>
        <div className="mb-11 w-7 bg-[#4a4a4a]" />
      </div>
    </section>
  );
}

export default function App() {
  return (
    <div className="relative flex h-screen w-full flex-col overflow-hidden border-b-2 border-[#83a9ee] bg-[#535353] font-['Open_Sans','Noto_Sans_CJK_SC',sans-serif] text-[21px] leading-7 text-[#f0f0f0]">
      <TitleBar />
      <OptionsBar />
      <div className="flex min-h-0 flex-1">
        <ToolBar />
        <Document />
        <PanelStrip />
        <aside className="flex w-[500px] shrink-0 flex-col border-r-2 border-[#404040]">
          <div className="flex h-[21px] shrink-0 items-center justify-end border-b-2 border-[#3b3b3b] bg-[#424242] pr-2.5">
            <DoubleChevron flip />
          </div>
          <LayersPanel />
          <PropertiesPanel />
        </aside>
      </div>
      <svg viewBox="0 0 543 515" className="pointer-events-none absolute top-[639px] left-[1820px] h-[515px] w-[543px] fill-[#fd3836]">
        <path d="M0 513L528 9l-3-3L543 0l-6 17-4-2L1 515z" />
      </svg>
    </div>
  );
}
